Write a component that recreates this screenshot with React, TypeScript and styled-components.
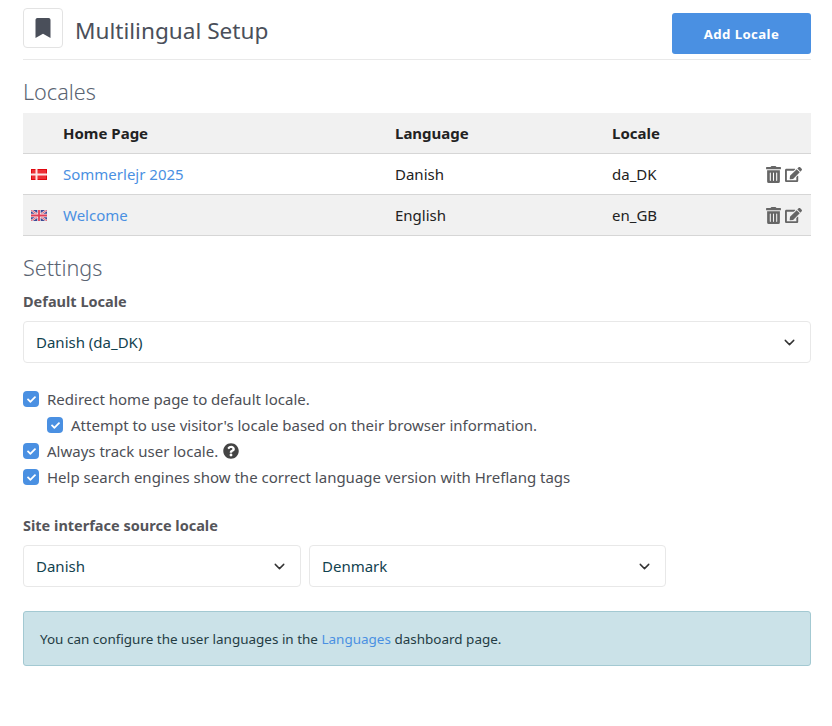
import React from 'react';
import styled, { createGlobalStyle } from 'styled-components';
import { FaBookmark, FaCheck, FaEdit, FaQuestionCircle, FaTrashAlt } from 'react-icons/fa';
import { FiChevronDown } from 'react-icons/fi';

const GlobalStyle = createGlobalStyle`
  body {
    margin: 0;
    background: #fff;
    color: #4d4f56;
    font-family: "Noto Sans", "Open Sans", sans-serif;
    font-size: 15px;
  }
`;

const Page = styled.div`
  width: 788px;
  padding: 8px 21px 0 23px;
`;

const Header = styled.header`
  display: flex;
  align-items: center;
  justify-content: space-between;
  height: 51px;
  border-bottom: 1px solid #e9e9e9;
`;

const HeaderLeft = styled.div`
  display: flex;
  align-items: center;
  gap: 12px;
  margin-top: -11px;
`;

const IconBox = styled.div`
  width: 38px;
  height: 38px;
  border: 1px solid #e3e3e3;
  border-radius: 4px;
  display: flex;
  align-items: center;
  justify-content: center;
  font-size: 20px;
  color: #4a4f5a;
`;

const PageTitle = styled.h1`
  margin: 4px 0 0;
  font-size: 22.6px;
  font-weight: 400;
  color: #4a4f5a;
`;

const AddButton = styled.button`
  width: 139px;
  height: 41px;
  margin-top: -1px;
  padding: 2px 0 0;
  border: 0;
  border-radius: 3px;
  background: #4a90e2;
  color: #fff;
  font-family: inherit;
  font-size: 13.2px;
  font-weight: 700;
  letter-spacing: 0.4px;
`;

const SectionTitle = styled.h2`
  margin: 16px 0 6px;
  font-size: 21.6px;
  line-height: 31px;
  font-weight: 300;
  color: #5a6472;
`;

const TableGrid = styled.div`
  display: flex;
  flex-direction: column;
`;

const Row = styled.div<{ $shaded?: boolean; $head?: boolean }>`
  display: grid;
  grid-template-columns: 40px 332px 217px 1fr 46px;
  align-items: center;
  height: 40px;
  background: ${(p) => (p.$shaded ? '#f1f1f1' : '#fff')};
  border-bottom: 1px solid #d6d6d6;
  color: #222;
  font-weight: ${(p) => (p.$head ? 700 : 400)};
`;

const FlagCell = styled.div`
  display: flex;
  padding-left: 8px;
`;

const RowLink = styled.a`
  color: #4a90e2;
  text-decoration: none;
`;

const Actions = styled.div`
  display: flex;
  align-items: center;
  gap: 3px;
  font-size: 17px;
  color: #666;
`;

const FieldLabel = styled.div`
  margin-top: 8px;
  font-weight: 700;
  font-size: 14.5px;
  color: #55555a;
`;

const Select = styled.div<{ $width?: string }>`
  width: ${(p) => p.$width || '100%'};
  box-sizing: border-box;
  height: 42px;
  display: flex;
  align-items: center;
  justify-content: space-between;
  padding: 0 12px;
  border: 1px solid #e8e8e8;
  border-radius: 4px;
  color: #12424f;
  font-size: 15px;
  svg {
    font-size: 17px;
    color: #333;
  }
`;

const Checks = styled.div`
  display: flex;
  flex-direction: column;
  gap: 6px;
  margin: 26px 0 28px;
`;

const CheckRow = styled.label<{ $nested?: boolean }>`
  display: flex;
  align-items: center;
  gap: 8px;
  height: 20px;
  padding-left: ${(p) => (p.$nested ? '24px' : '0')};
`;

const Box = styled.span`
  width: 16px;
  height: 16px;
  border-radius: 4px;
  background: #4a90e2;
  color: #fff;
  display: flex;
  align-items: center;
  justify-content: center;
  font-size: 9px;
`;

const HelpIcon = styled(FaQuestionCircle)`
  margin-left: 5px;
  font-size: 16px;
  vertical-align: -2px;
  color: #444;
`;

const SelectRow = styled.div`
  display: flex;
  gap: 8px;
  margin-top: 10px;
`;

const Notice = styled.div`
  margin-top: 24px;
  height: 53px;
  display: flex;
  align-items: center;
  padding: 0 16px;
  border: 1px solid #a3c9d2;
  border-radius: 3px;
  background: #cbe2e8;
  color: #243c44;
  font-size: 13.47px;
`;

function DenmarkFlag() {
  return (
    <svg width="16" height="11" viewBox="0 0 16 11">
      <rect width="16" height="11" fill="#e0070f" />
      <rect x="1" y="1" width="14" height="9" fill="#ec2f35" />
      <rect x="4.5" width="2" height="11" fill="#fde4e4" />
      <rect y="4.5" width="16" height="2" fill="#fde4e4" />
    </svg>
  );
}

function UkFlag() {
  return (
    <svg width="16" height="11" viewBox="0 0 16 11">
      <rect width="16" height="11" fill="#3c4a96" />
      <path d="M0 0L16 11M16 0L0 11" stroke="#f3dfe2" strokeWidth="2.2" />
      <path d="M0 0L16 11M16 0L0 11" stroke="#d8304a" strokeWidth="0.7" />
      <path d="M8 0V11M0 5.5H16" stroke="#f6e8ea" strokeWidth="3.4" />
      <path d="M8 0V11M0 5.5H16" stroke="#e04058" strokeWidth="1.8" />
    </svg>
  );
}

function Check({ nested, children }: { nested?: boolean; children: React.ReactNode }) {
  return (
    <CheckRow $nested={nested}>
      <Box>
        <FaCheck />
      </Box>
      <span>{children}</span>
    </CheckRow>
  );
}

export default function App() {
  return (
    <Page>
      <GlobalStyle />
      <Header>
        <HeaderLeft>
          <IconBox>
            <FaBookmark />
          </IconBox>
          <PageTitle>Multilingual Setup</PageTitle>
        </HeaderLeft>
        <AddButton>Add Locale</AddButton>
      </Header>

      <SectionTitle>Locales</SectionTitle>
      <TableGrid>
        <Row $head $shaded>
          <span />
          <span>Home Page</span>
          <span>Language</span>
          <span>Locale</span>
          <span />
        </Row>
        <Row>
          <FlagCell>
            <DenmarkFlag />
          </FlagCell>
          <RowLink>Sommerlejr 2025</RowLink>
          <span>Danish</span>
          <span>da_DK</span>
          <Actions>
            <FaTrashAlt />
            <FaEdit />
          </Actions>
        </Row>
        <Row $shaded>
          <FlagCell>
            <UkFlag />
          </FlagCell>
          <RowLink>Welcome</RowLink>
          <span>English</span>
          <span>en_GB</span>
          <Actions>
            <FaTrashAlt />
            <FaEdit />
          </Actions>
        </Row>
      </TableGrid>

      <SectionTitle>Settings</SectionTitle>
      <FieldLabel>Default Locale</FieldLabel>
      <SelectRow>
        <Select>
          Danish (da_DK)
          <FiChevronDown />
        </Select>
      </SelectRow>

      <Checks>
        <Check>Redirect home page to default locale.</Check>
        <Check nested>Attempt to use visitor's locale based on their browser information.</Check>
        <Check>
          Always track user locale.
          <HelpIcon />
        </Check>
        <Check>Help search engines show the correct language version with Hreflang tags</Check>
      </Checks>

      <FieldLabel>Site interface source locale</FieldLabel>
      <SelectRow>
        <Select $width="278px">
          Danish
          <FiChevronDown />
        </Select>
        <Select $width="357px">
          Denmark
          <FiChevronDown />
        </Select>
      </SelectRow>

      <Notice>
        <span>
          You can configure the user languages in the <RowLink>Languages</RowLink> dashboard page.
        </span>
      </Notice>
    </Page>
  );
}
